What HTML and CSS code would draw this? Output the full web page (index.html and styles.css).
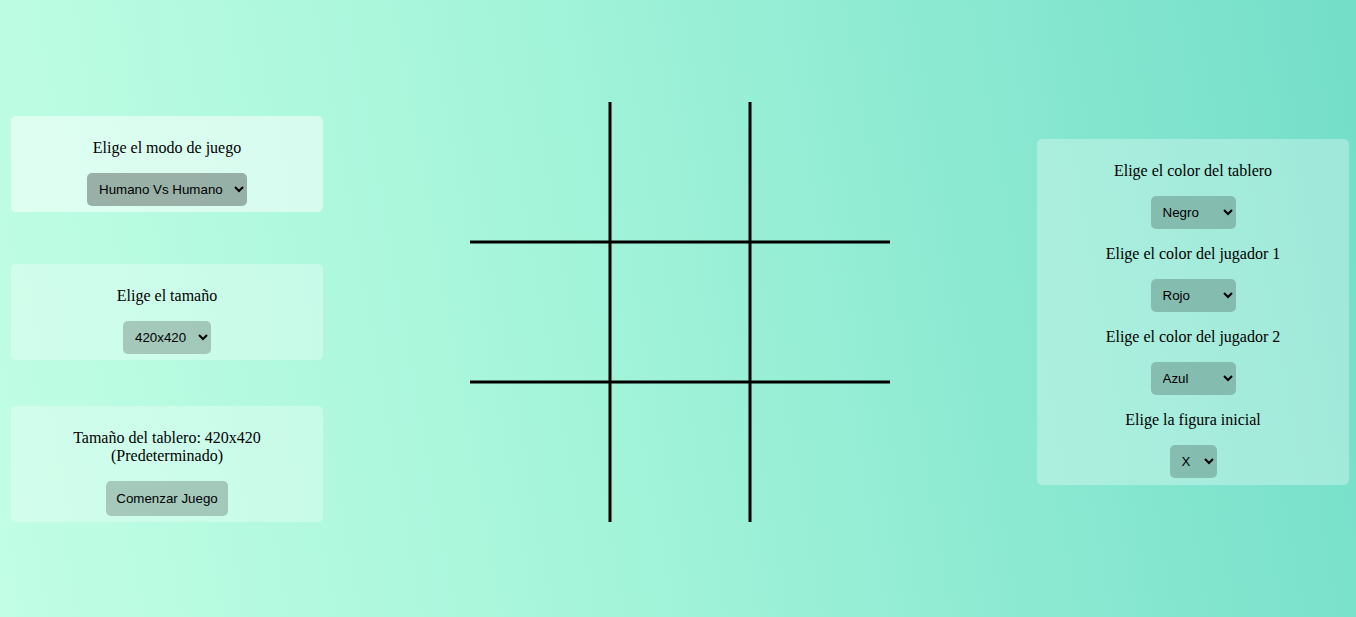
FILE: index.html
```html
<!DOCTYPE html>
<html>
<head>
    <title>Tres en Raya</title>
    <link rel="stylesheet" href="styles.css">
</head>
<body>

    <div class="container">
        <div class="left-column">
            <div class="panel panel-active">
                <p>Elige el modo de juego</p>
                <select id="modeSelect">
                    <option>Humano Vs Humano</option>
                    <option>Humano Vs IA</option>
                </select>
            </div>
            <div class="panel panel-size">
                <p>Elige el tamaño</p>
                <select id="sizeSelect">
                    <option>420x420</option>
                    <option>300x300</option>
                    <option>600x600</option>
                </select>
            </div>
            <div class="panel panel-start">
                <p>Tamaño del tablero: 420x420<br>(Predeterminado)</p>
                <button id="startButton">Comenzar Juego</button>
            </div>
        </div>

        <div class="board">
            <svg width="420" height="420" viewBox="0 0 420 420">
                <line x1="140" y1="0" x2="140" y2="420" stroke="#000" stroke-width="3"/>
                <line x1="280" y1="0" x2="280" y2="420" stroke="#000" stroke-width="3"/>
                <line x1="0" y1="140" x2="420" y2="140" stroke="#000" stroke-width="3"/>
                <line x1="0" y1="280" x2="420" y2="280" stroke="#000" stroke-width="3"/>
            </svg>
        </div>

        <div class="panel panel-colors">
            <p>Elige el color del tablero</p>
            <select id="boardColor">
                <option>Negro</option>
                <option>Blanco</option>
                <option>Amarillo</option>
            </select>
            <p>Elige el color del jugador 1</p>
            <select id="player1Color">
                <option>Rojo</option>
                <option>Azul</option>
                <option>Amarillo</option>
            </select>
            <p>Elige el color del jugador 2</p>
            <select id="player2Color">
                <option>Azul</option>
                <option>Rojo</option>
                <option>Amarillo</option>
            </select>
            <p>Elige la figura inicial</p>
            <select id="firstFigure">
                <option>X</option>
                <option>O</option>
            </select>
        </div>
    </div>

</body>
</html>
```

FILE: styles.css
```css
html, body {
    margin: 0;
    height: 100%;
}
body {
    background: linear-gradient(80deg, #c1fee5 0%, #a5f5da 40%, #74dec9 100%);
    font-family: "Liberation Serif", "Times New Roman", serif;
    color: black;
}
.container {
    display: flex;
    justify-content: space-between;
    align-items: center;
    height: 100vh;
    padding: 7px 7px 0 11px;
    box-sizing: border-box;
}
.left-column {
    display: flex;
    flex-direction: column;
    margin-top: 14px;
}
.panel {
    width: 312px;
    box-sizing: border-box;
    padding: 7px;
    background-color: rgba(255, 255, 255, 0.3);
    border-radius: 5px;
    text-align: center;
}
.panel p {
    margin: 16px 0;
    font-size: 16px;
}
.panel-active {
    height: 96px;
    background-color: rgba(255, 255, 255, 0.5);
}
.panel-size {
    height: 96px;
    margin-top: 52px;
}
.panel-start {
    height: 116px;
    margin-top: 46px;
}
select, button {
    font-family: "Liberation Sans", Arial, sans-serif;
    font-size: 13.33px;
    color: black;
    border: none;
    border-radius: 5px;
    background-color: rgba(0, 0, 0, 0.2);
}
select {
    display: block;
    margin: 0 auto;
    padding: 8px;
}
button {
    padding: 10px;
    cursor: pointer;
}
.panel-active select {
    background-color: rgba(0, 0, 0, 0.3);
}
.board {
    width: 420px;
    height: 420px;
}
.board svg {
    display: block;
}
```
